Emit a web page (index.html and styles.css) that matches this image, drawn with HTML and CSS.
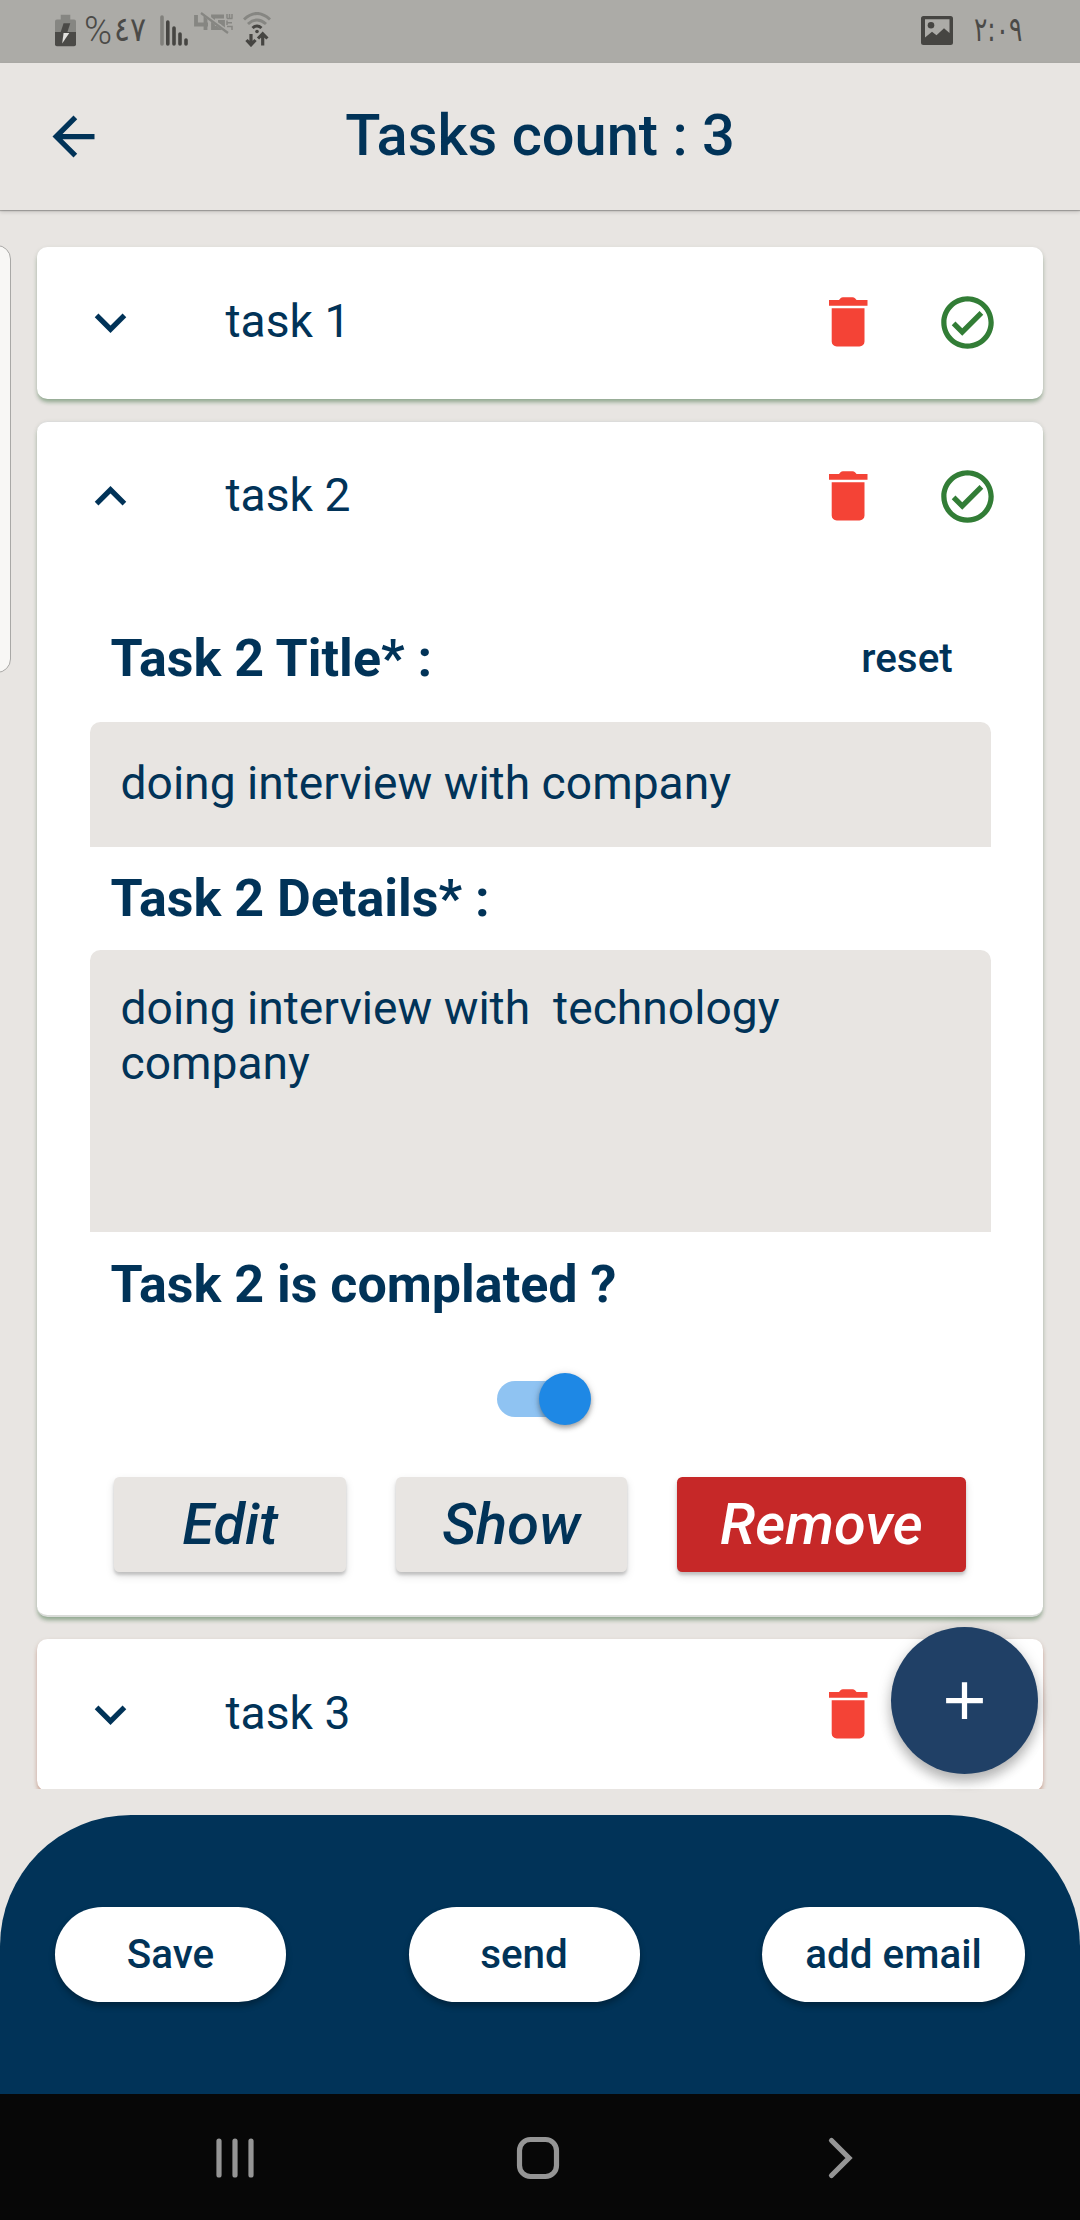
FILE: index.html
```html
<!DOCTYPE html>
<html lang="en">
<head>
<meta charset="utf-8">
<title>Tasks</title>
<link rel="stylesheet" href="styles.css">
</head>
<body>
<svg class="defs" aria-hidden="true">
  <symbol id="trash" viewBox="0 0 40 50"><path d="M1 3h10l1.500-1.700Q13.500.300 15 .300h9.500q1.500 0 2.500 1L28.600 3H39.500v5.700H1z"/><path d="M3.700 11.300h32.800v33.200a5 5 0 0 1-5 5H8.700a5 5 0 0 1-5-5z"/></symbol>
  <symbol id="check" viewBox="0 0 24 24"><path d="M16.590 7.580L10 14.170l-2.590-2.580L6 13l4 4 8-8-1.410-1.420zM12 2C6.480 2 2 6.480 2 12s4.480 10 10 10 10-4.480 10-10S17.520 2 12 2zm0 18c-4.420 0-8-3.580-8-8s3.580-8 8-8 8 3.580 8 8-3.580 8-8 8z"/></symbol>
  <symbol id="down" viewBox="0 0 24 24"><path d="M16.590 8.590L12 13.170 7.410 8.590 6 10l6 6 6-6z"/></symbol>
  <symbol id="up" viewBox="0 0 24 24"><path d="M12 8l-6 6 1.410 1.410L12 10.830l4.590 4.580L18 14z"/></symbol>
</svg>

<div class="status">
  <svg class="st-battery" viewBox="0 0 22 33"><path fill="#868682" d="M6 0h10v5h4q2 0 2 2v12H0V7q0-2 2-2h4z"/><path fill="#4b4a47" d="M0 18h22v13q0 2-2 2H2q-2 0-2-2z"/><path fill="#4b4a47" d="M9 9h7l-3 9H6z"/><path fill="#e2e1de" d="M9 19h6L7.500 30z"/></svg>
  <span class="pct">%</span>
  <span class="st-text st-level">٤٧</span>
  <svg class="st-signal" viewBox="0 0 28 31" stroke-width="3.600" stroke-linecap="round"><path stroke="#81807c" d="M2 2v27"/><path stroke="#464542" d="M7.800 7v22M14 13v16M20 19v10M26 25v4"/></svg>
  <svg class="st-lte" viewBox="0 0 40 24" fill="none" stroke="#868682"><path stroke-width="3.800" d="M2 3v9.500h12M11.500 3v15M30 4.500H19v11.500h10v-6h-5"/><path stroke="#acaba7" stroke-width="3.600" d="M7 0l27 20"/><path stroke-width="2.200" d="M7 1l27 20"/><path stroke-width="1.500" d="M38 18v-3.500h-5M33 13V8.500M33 10.700h5M33 6.500V2M35.500 6.500V2M38 6.500V2M33 6.500h5.500"/></svg>
  <svg class="st-wifi" viewBox="0 0 28 35" fill="none"><path stroke="#868682" stroke-width="3" d="M1 7.500q13-12 26 0M5 12q9-8 18 0"/><path stroke="#464542" stroke-width="3" d="M9.500 16q4.500-4 9 0"/><circle cx="14" cy="19.500" r="1.800" fill="#464542"/><path stroke="#464542" stroke-width="3.200" d="M8 22v10M3.500 28L8 32.800l4.500-4.800M19.700 33.500V23M15 26.500l4.700-4.800 4.700 4.800"/></svg>
  <span class="grow"></span>
  <svg class="st-image" viewBox="0 0 32 29"><path fill="#464542" fill-rule="evenodd" d="M2.500 0h27Q32 0 32 2.500v24q0 2.500-2.500 2.500h-27Q0 29 0 26.500v-24Q0 0 2.500 0zM4 3.300V21.500l7-5.800 4.500 3.600 7.500-7 5.500 4.600V3.300z"/><circle cx="10" cy="9.300" r="3.300" fill="#464542"/></svg>
  <span class="st-text st-time">٢:٠٩</span>
</div>

<header class="appbar">
  <svg class="back" viewBox="0 0 24 24"><path d="M20 11H7.830l5.590-5.590L12 4l-8 8 8 8 1.410-1.410L7.830 13H20v-2z"/></svg>
  <h1>Tasks count : 3</h1>
</header>

<main class="list">
  <section class="card">
    <div class="card-head">
      <svg class="chev"><use href="#down"/></svg>
      <span class="name">task 1</span>
      <svg class="trash"><use href="#trash"/></svg>
      <svg class="check"><use href="#check"/></svg>
    </div>
  </section>
  <section class="card open">
    <div class="card-head">
      <svg class="chev"><use href="#up"/></svg>
      <span class="name">task 2</span>
      <svg class="trash"><use href="#trash"/></svg>
      <svg class="check"><use href="#check"/></svg>
    </div>
    <div class="card-body">
      <div class="label-row"><h2>Task 2 Title* :</h2><span class="reset">reset</span></div>
      <div class="field single">doing interview with company</div>
      <div class="label-row"><h2>Task 2 Details* :</h2></div>
      <div class="field multi">doing interview with  technology company</div>
      <div class="label-row"><h2>Task 2 is complated ?</h2></div>
      <div class="switch"><span class="thumb"></span></div>
      <div class="actions">
        <button class="act">Edit</button>
        <button class="act">Show</button>
        <button class="act danger">Remove</button>
      </div>
    </div>
  </section>
  <section class="card pending">
    <div class="card-head">
      <svg class="chev"><use href="#down"/></svg>
      <span class="name">task 3</span>
      <svg class="trash"><use href="#trash"/></svg>
      <svg class="check"><use href="#check"/></svg>
    </div>
  </section>
</main>

<footer class="bottom">
  <button class="pill">Save</button>
  <button class="pill">send</button>
  <button class="pill">add email</button>
</footer>

<nav class="sysnav">
  <svg viewBox="0 0 44 44"><path d="M6 5v34M22 5v34M38 5v34"/></svg>
  <svg viewBox="0 0 44 44"><rect x="3.500" y="3.500" width="37" height="37" rx="11"/></svg>
  <svg viewBox="0 0 44 44"><path d="M12.500 4.500L30 22 12.500 39.500"/></svg>
</nav>

<div class="edge"></div>
<button class="fab"><svg viewBox="0 0 24 24"><path d="M19 13h-6v6h-2v-6H5v-2h6V5h2v6h6v2z"/></svg></button>
</body>
</html>
```
FILE: styles.css
```css
* { box-sizing: border-box; }
body {
  margin: 0;
  width: 1080px;
  height: 2220px;
  position: relative;
  overflow: hidden;
  display: flex;
  flex-direction: column;
  background: #e8e5e2;
  color: #013358;
  font-family: Roboto, sans-serif;
}
h1, h2 { margin: 0; }
button { border: 0; padding: 0; font-family: inherit; color: inherit; }
svg { display: block; flex: none; fill: currentColor; }
.defs { position: absolute; width: 0; height: 0; }
.grow { flex: 1; }

/* status bar */
.status {
  height: 63px;
  flex: none;
  display: flex;
  align-items: flex-start;
  padding: 0 57px 0 55px;
  background: #acaba7;
  color: #4b4a47;
}
.status svg[fill="none"] { fill: none; }
.st-battery { width: 21px; height: 33px; margin-top: 14px; }
.st-text {
  font-family: "DejaVu Sans", sans-serif;
  direction: ltr;
  unicode-bidi: bidi-override;
  white-space: nowrap;
  line-height: 40px;
  transform-origin: 0 50%;
}
.pct { width: 30px; margin: 11px 0 0 8px; font-size: 38px; font-weight: 300; line-height: 40px; }
.st-level { width: 46px; margin-top: 9px; font-size: 34px; transform: scaleX(.88); }
.st-signal { width: 28px; height: 31px; margin: 15px 0 0; }
.st-lte { width: 40px; height: 24px; margin: 12px 0 0 6px; }
.st-wifi { width: 28px; height: 35px; margin: 12px 0 0 9px; }
.st-image { width: 32px; height: 29px; margin-top: 16px; }
.st-time { width: 49px; margin: 9px 0 0 21px; font-size: 34px; transform: scaleX(.73); }

/* app bar */
.appbar {
  position: relative;
  z-index: 1;
  height: 147px;
  flex: none;
  display: flex;
  align-items: center;
  justify-content: center;
  background: #e8e5e2;
  box-shadow: 0 1px 1px rgba(0, 0, 0, .24), 0 2px 4px rgba(0, 0, 0, .15);
}
.back { position: absolute; left: 42px; top: 42px; width: 63px; height: 63px; }
.appbar h1 { margin-top: -3px; font-size: 57.750px; font-weight: 500; line-height: 68px; }

/* task list */
.list {
  height: 1579px;
  flex: none;
  display: flex;
  flex-direction: column;
  padding: 36.500px 36.750px 0 36.500px;
  overflow: hidden;
}
.card {
  flex: none;
  height: 152.500px;
  margin-bottom: 21.500px;
  border-radius: 10.500px;
  background: #fff;
  box-shadow: 0 4px 4px -1px rgba(46, 105, 50, .4), 0 2px 5px rgba(60, 90, 60, .16);
}
.card.open {
  height: 1196.500px;
  border-top: 1px solid #dcdcdb;
  border-bottom: 2px solid #d9dbd8;
}
.card.pending { box-shadow: 0 4px 4px -1px rgba(170, 74, 40, .4), 0 2px 5px rgba(150, 80, 50, .2); }
.card-head { display: flex; align-items: center; height: 152.500px; padding: 0 44px 0 42px; }
.card.open .card-head { margin-top: -1px; }
.chev { width: 63px; height: 63px; }
.name { flex: 1; margin-left: 84px; font-size: 46.200px; line-height: 54px; margin-top: -3px; }
.trash { width: 40px; height: 50px; color: #f44336; margin: -1px 68.500px 0 0; }
.check { width: 63px; height: 63px; color: #327d36; }
.card-body { padding: 55px 52.500px 0 53px; }
.label-row {
  display: flex;
  align-items: center;
  justify-content: space-between;
  height: 60px;
  padding: 0 38px 0 21px;
}
.label-row h2 { margin-top: 2px; font-size: 52px; font-weight: 700; line-height: 60px; }
.reset { margin-top: 2px; font-size: 40.400px; font-weight: 500; line-height: 48px; }
.field {
  padding: 0 31px;
  border-radius: 10.500px 10.500px 0 0;
  background: #e8e5e2;
  font-size: 46.200px;
  line-height: 54.600px;
  white-space: pre-wrap;
}
.single { height: 125px; margin: 34px 0 21px; padding-top: 34px; }
.multi { height: 282px; margin: 22px 0 22px; padding-top: 31px; }
.switch {
  display: flex;
  align-items: center;
  justify-content: flex-end;
  width: 86.600px;
  height: 36.750px;
  margin: 66.500px auto 60px;
  border-radius: 19px;
  background: #8fc3f2;
}
.thumb {
  flex: none;
  width: 52.500px;
  height: 52.500px;
  margin-right: -8px;
  border-radius: 50%;
  background: #1e88e5;
  box-shadow: 0 3px 5px rgba(0, 0, 0, .3), 0 1px 8px rgba(0, 0, 0, .15);
}
.actions { display: flex; justify-content: space-around; }
.act {
  width: 231.500px;
  height: 94.500px;
  border-radius: 5.250px;
  background: #e8e5e2;
  font-size: 57.750px;
  font-style: italic;
  font-weight: 500;
  line-height: 90px;
  padding-bottom: 2px;
  box-shadow: 0 3px 3px rgba(0, 0, 0, .16), 0 4px 8px rgba(0, 0, 0, .13);
}
.act.danger { width: 289px; background: #c62828; color: #fff; }

/* bottom actions */
.bottom {
  height: 279px;
  flex: none;
  margin-top: 26px;
  display: flex;
  align-items: center;
  justify-content: space-between;
  padding: 0 55px;
  border-radius: 131px 131px 0 0;
  background: #013358;
}
.pill {
  width: 231px;
  height: 94.500px;
  border-radius: 48px;
  background: #fff;
  font-size: 40.400px;
  font-weight: 500;
  line-height: 92px;
  box-shadow: 0 4px 6px rgba(0, 0, 0, .3);
}
.pill:last-child { width: 263px; }

/* system navigation */
.sysnav {
  height: 126px;
  flex: none;
  display: flex;
  align-items: center;
  justify-content: space-between;
  padding: 2px 217px 0 213px;
  background: #070707;
}
.sysnav svg { width: 44px; height: 44px; fill: none; stroke: #959595; stroke-width: 5.200; stroke-linecap: round; }

/* floating layers */
.edge {
  position: absolute;
  left: -40px;
  top: 245px;
  width: 51px;
  height: 428px;
  border: 1px solid #a9a8a6;
  border-radius: 14px;
  background: #f8f7f5;
}
.fab {
  position: absolute;
  left: 891px;
  top: 1626.500px;
  width: 147px;
  height: 147px;
  display: flex;
  align-items: center;
  justify-content: center;
  border-radius: 50%;
  background: #204066;
  color: #fff;
  z-index: 2;
  box-shadow: 0 8px 12px rgba(0, 0, 0, .22), 0 3px 16px rgba(0, 0, 0, .14);
}
.fab svg { width: 63px; height: 63px; }
```
